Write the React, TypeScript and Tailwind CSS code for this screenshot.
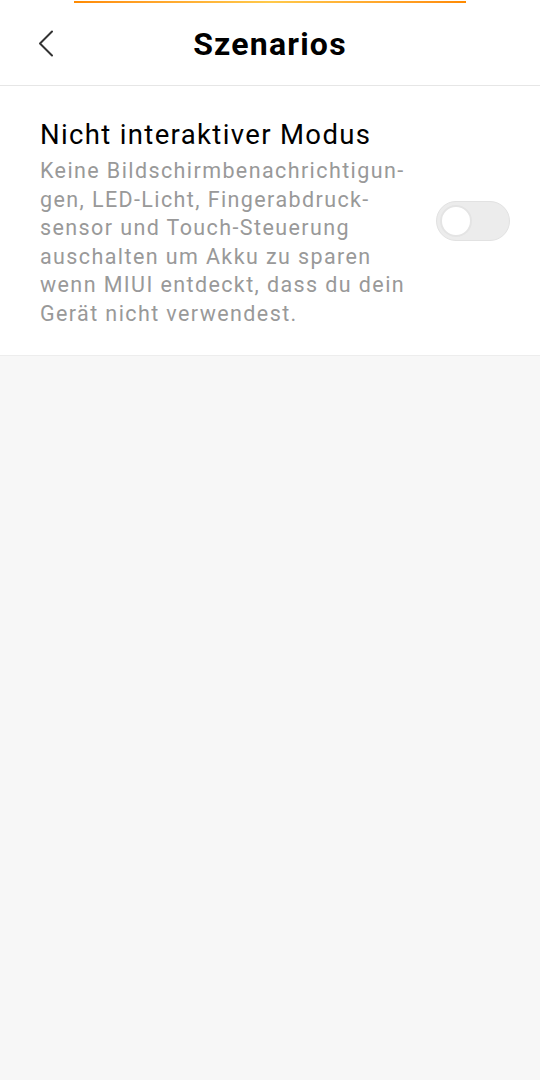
const Toggle = () => {
  return (
    <div className="w-[74px] h-[40px] rounded-full bg-[#ececec] border border-[#e2e2e2] flex items-center px-[3px] shrink-0">
      <div className="w-[32px] h-[32px] rounded-full bg-white border-2 border-[#e4e4e4]" />
    </div>
  )
}

export default function App() {
  return (
    <div className="min-h-[1080px] w-[540px] bg-[#f7f7f7] font-['Roboto',sans-serif]">
      {/* Header */}
      <div className="bg-white relative h-[86px] flex items-center justify-center border-b border-[#e6e6e6]">
        <div className="absolute top-[1px] left-[74px] w-[392px] h-[2px] bg-gradient-to-r from-[#ff8a00] via-[#ffc94a] to-[#ff8a00]" />
        <svg className="absolute left-[34px] top-[28px]" width="24" height="32" viewBox="0 0 24 32" fill="none">
          <polyline points="18,3.5 6,15.5 18,27.5" stroke="#333" strokeWidth="2" strokeLinecap="round" strokeLinejoin="round" />
        </svg>
        <h1 className="text-[32px] font-bold text-black tracking-[1.2px] mt-[2px]">Szenarios</h1>
      </div>

      {/* Setting */}
      <div className="bg-white flex items-center pl-[40px] pr-[30px] pt-[31px] pb-[26px] border-b border-[#ededed]">
        <div className="flex flex-col w-[385px]">
          <p className="text-[27.5px] leading-[36px] text-black tracking-[1.35px]">Nicht interaktiver Modus</p>
          <p className="text-[21.5px] leading-[28.6px] text-[#999999] mt-[4px] tracking-[1.4px]">
            Keine Bildschirmbenachrichtigun-<br />
            gen, LED-Licht, Fingerabdruck-<br />
            sensor und Touch-Steuerung<br />
            auschalten um Akku zu sparen<br />
            wenn MIUI entdeckt, dass du dein<br />
            Gerät nicht verwendest.
          </p>
        </div>
        <div className="ml-auto mb-[4px]">
          <Toggle />
        </div>
      </div>
    </div>
  )
}
